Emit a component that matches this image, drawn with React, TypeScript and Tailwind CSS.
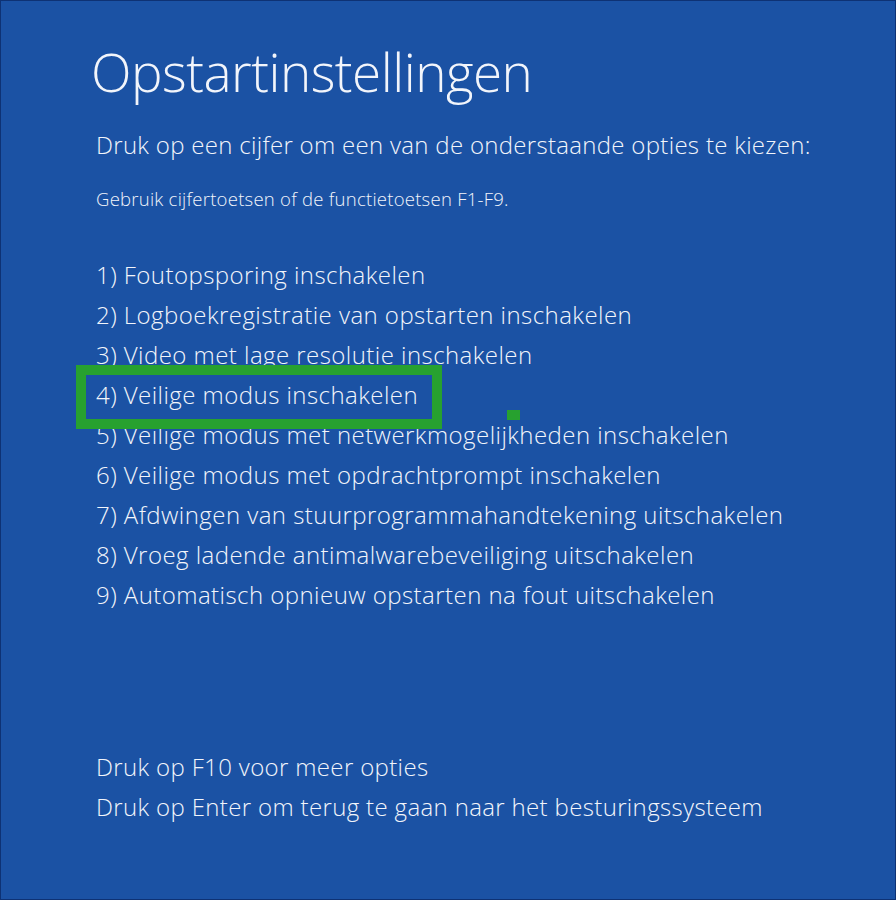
import React from 'react';

const options = [
  '1) Foutopsporing inschakelen',
  '2) Logboekregistratie van opstarten inschakelen',
  '3) Video met lage resolutie inschakelen',
  '4) Veilige modus inschakelen',
  '5) Veilige modus met netwerkmogelijkheden inschakelen',
  '6) Veilige modus met opdrachtprompt inschakelen',
  '7) Afdwingen van stuurprogrammahandtekening uitschakelen',
  '8) Vroeg ladende antimalwarebeveiliging uitschakelen',
  '9) Automatisch opnieuw opstarten na fout uitschakelen',
];

const App: React.FC = () => {
  return (
    <div
      className="w-[896px] h-[900px] bg-[#1b52a4] border border-[#0e3274] text-[#f2f5fb] overflow-hidden flex flex-col pl-[95px]"
      style={{ fontFamily: '"Open Sans", "Noto Sans", sans-serif' }}
    >
      <h1 className="mt-[36px] text-[53px] leading-[70px] font-light tracking-[-0.5px] -ml-[5px]">
        Opstartinstellingen
      </h1>
      <p className="mt-[22px] text-[24px] leading-[32px] font-light tracking-[0.3px]">
        Druk op een cijfer om een van de onderstaande opties te kiezen:
      </p>
      <p className="mt-[26px] text-[18.5px] leading-[24px] font-light tracking-[0.25px]">
        Gebruik cijfertoetsen of de functietoetsen F1-F9.
      </p>

      <ul className="mt-[44px] flex flex-col">
        {options.map((o, i) => (
          <li key={o} className="relative text-[24px] leading-[40px] font-light tracking-[0.45px]">
            {i === 3 && (
              <>
                <span className="absolute z-10 -left-[20px] -top-[10px] w-[366px] h-[64px] border-[10px] border-[#27a12f] pointer-events-none" />
                <span className="absolute z-10 left-[411px] top-[35px] w-[13px] h-[10px] bg-[#27a12f]" />
              </>
            )}
            {o}
          </li>
        ))}
      </ul>

      <div className="mt-[132px] flex flex-col">
        <p className="text-[24px] leading-[40px] font-light tracking-[0.35px]">Druk op F10 voor meer opties</p>
        <p className="text-[24px] leading-[40px] font-light tracking-[0.35px]">
          Druk op Enter om terug te gaan naar het besturingssysteem
        </p>
      </div>
    </div>
  );
};

export default App;
